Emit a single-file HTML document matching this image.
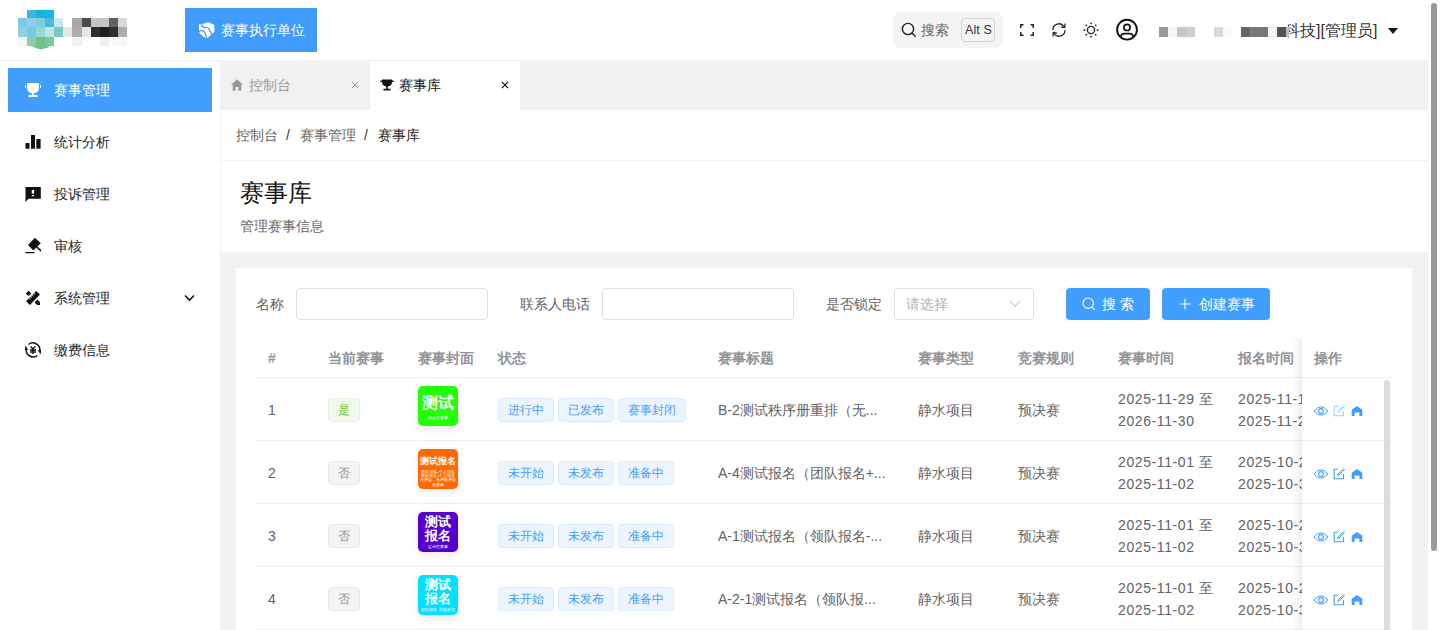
<!DOCTYPE html>
<html><head><meta charset="utf-8"><style>
*{box-sizing:border-box;margin:0;padding:0}
html,body{width:1440px;height:630px;overflow:hidden;background:#fff;font-family:"Liberation Sans",sans-serif;font-size:14px;color:#303133}
.a{position:absolute;white-space:nowrap}
.px{position:absolute;display:block}
.t14{font-size:14px;line-height:20px}
.menu{position:absolute;left:8px;width:204px;height:44px;color:#1f1f1f}
.menu.active{background:#409eff;color:#fff}
.menu svg{position:absolute;left:17px;top:14px}
.menu span{position:absolute;left:46px;top:12px;line-height:20px;font-size:14px}
.inp{position:absolute;top:288px;height:32px;border:1px solid #dcdfe6;border-radius:4px;background:#fff}
.lbl{position:absolute;top:294px;line-height:20px;color:#606266;font-size:14px}
.btn{position:absolute;top:288px;height:32px;border-radius:4px;background:#409eff;color:#fff}
.th{position:absolute;top:348px;line-height:20px;font-weight:bold;color:#909399;font-size:14px}
.hl{position:absolute;left:256px;width:1136px;height:1px;background:#ebeef5}
.td{position:absolute;line-height:20px;color:#606266;font-size:14px}
.tag{position:absolute;height:24px;line-height:22px;font-size:12px;border:1px solid #d9ecff;background:#ecf5ff;color:#409eff;border-radius:4px;text-align:center}
.tagg{border-color:#e1f3d8;background:#f0f9eb;color:#67c23a}
.tagi{border-color:#e9e9eb;background:#f4f4f5;color:#909399}
.cover{position:absolute;left:418px;width:40px;height:40px;border-radius:5px;color:#fff;text-align:center;overflow:hidden;box-shadow:0 3px 8px rgba(0,0,0,.09)}
</style></head><body>
<div class="a" style="left:0;top:0;width:1428px;height:60px;background:#fff"></div>
<div class="a" style="left:0;top:60px;width:1428px;height:1px;background:#efefef"></div>
<i class="px" style="left:27px;top:10px;width:9px;height:8px;background:#3db6d9"></i><i class="px" style="left:36px;top:10px;width:9px;height:8px;background:#17b3da"></i><i class="px" style="left:45px;top:10px;width:9px;height:8px;background:#17b7df"></i><i class="px" style="left:18px;top:18px;width:9px;height:9px;background:#7fc8e9"></i><i class="px" style="left:27px;top:18px;width:9px;height:9px;background:#8dcfea"></i><i class="px" style="left:36px;top:18px;width:9px;height:9px;background:#7dcde1"></i><i class="px" style="left:45px;top:18px;width:9px;height:9px;background:#4bb9d9"></i><i class="px" style="left:54px;top:18px;width:9px;height:9px;background:#c9e9f1"></i><i class="px" style="left:72px;top:18px;width:10px;height:9px;background:#a9a9a9"></i><i class="px" style="left:82px;top:18px;width:9px;height:9px;background:#4b4b4b"></i><i class="px" style="left:91px;top:18px;width:9px;height:9px;background:#c5c5c5"></i><i class="px" style="left:100px;top:18px;width:9px;height:9px;background:#c5c5c5"></i><i class="px" style="left:109px;top:18px;width:9px;height:9px;background:#626262"></i><i class="px" style="left:118px;top:18px;width:9px;height:9px;background:#d9d9d9"></i><i class="px" style="left:18px;top:27px;width:9px;height:10px;background:#8dd0df"></i><i class="px" style="left:27px;top:27px;width:9px;height:10px;background:#76cbe0"></i><i class="px" style="left:36px;top:27px;width:9px;height:10px;background:#9cd6d6"></i><i class="px" style="left:45px;top:27px;width:9px;height:10px;background:#c3e5e5"></i><i class="px" style="left:54px;top:27px;width:9px;height:10px;background:#7ac8c0"></i><i class="px" style="left:63px;top:27px;width:9px;height:10px;background:#e6e6e6"></i><i class="px" style="left:72px;top:27px;width:10px;height:10px;background:#adadad"></i><i class="px" style="left:82px;top:27px;width:9px;height:10px;background:#e6e6e6"></i><i class="px" style="left:91px;top:27px;width:9px;height:10px;background:#2e2e2e"></i><i class="px" style="left:100px;top:27px;width:9px;height:10px;background:#1f1f1f"></i><i class="px" style="left:109px;top:27px;width:9px;height:10px;background:#2e2e2e"></i><i class="px" style="left:118px;top:27px;width:9px;height:10px;background:#adadad"></i><i class="px" style="left:18px;top:37px;width:9px;height:9px;background:#f3f7f6"></i><i class="px" style="left:27px;top:37px;width:9px;height:9px;background:#8ecca9"></i><i class="px" style="left:36px;top:37px;width:9px;height:9px;background:#70c18f"></i><i class="px" style="left:45px;top:37px;width:9px;height:9px;background:#7ec69b"></i><i class="px" style="left:72px;top:37px;width:10px;height:9px;background:#f1f1f1"></i><i class="px" style="left:100px;top:37px;width:9px;height:9px;background:#efefef"></i><i class="px" style="left:109px;top:37px;width:9px;height:9px;background:#fafafa"></i><i class="px" style="left:118px;top:37px;width:9px;height:9px;background:#f7f7f7"></i>
<svg class="a" style="left:28px;top:44px" width="26" height="8" viewBox="0 0 26 8"><path d="M3.5 1.8 Q13 9 22.5 1.8 Z" fill="#6cc38a"/></svg>
<div class="a" style="left:185px;top:8px;width:132px;height:44px;background:#419dfd"></div>
<svg class="a" style="left:194px;top:18px" width="24" height="24" viewBox="0 0 24 24"><path d="M5 6 H8.3 L14.3 4.2 L20.4 7 V13.8 L13.6 19.9 L11.2 19.9 L5.8 15.5 L5 13.8 Z" fill="#fff"/><path d="M7.6 6 Q7.8 9.6 11 9.6 Q13.6 8.9 14.7 10.7 L18.2 17" fill="none" stroke="#419dfd" stroke-width="1.3"/><path d="M4.3 14.2 Q7.6 11.4 10.2 13.6 Q11.7 15.2 12.4 20.6" fill="none" stroke="#419dfd" stroke-width="1.3"/></svg>
<div class="a t14" style="left:221px;top:20px;color:#fff">赛事执行单位</div>
<div class="a" style="left:893px;top:12px;width:110px;height:36px;border-radius:8px;background:#f4f4f4"></div>
<svg class="a" style="left:901px;top:22px" width="16" height="16" viewBox="0 0 16 16"><circle cx="7" cy="7" r="5.6" fill="none" stroke="#222" stroke-width="1.4"/><line x1="11" y1="11" x2="14.2" y2="14.2" stroke="#222" stroke-width="1.5" stroke-linecap="round"/></svg>
<div class="a t14" style="left:921px;top:20px;color:#666">搜索</div>
<div class="a" style="left:961px;top:18px;width:34px;height:24px;border:1px solid #d4d4d4;border-radius:4px;background:#f4f4f4"></div>
<div class="a" style="left:965px;top:21px;font-size:12.5px;line-height:18px;color:#333;letter-spacing:0.1px">Alt S</div>
<svg class="a" style="left:1020px;top:24px" width="14" height="12" viewBox="0 0 14 12"><path d="M0.75 4 V0.75 H3.5 M10.5 0.75 H13.25 V4 M13.25 8 V11.25 H10.5 M3.5 11.25 H0.75 V8" fill="none" stroke="#222" stroke-width="1.5"/></svg>
<svg class="a" style="left:1051px;top:22px" width="16" height="16" viewBox="0 0 16 16"><path d="M2 8 A6 6 0 0 1 13 4.5" fill="none" stroke="#222" stroke-width="1.3"/><path d="M14 8 A6 6 0 0 1 3 11.5" fill="none" stroke="#222" stroke-width="1.3"/><path d="M14 1.5 L13.8 5.5 L10 4.8" fill="none" stroke="#222" stroke-width="1.3" stroke-linejoin="round"/><path d="M2 14.5 L2.2 10.5 L6 11.2" fill="none" stroke="#222" stroke-width="1.3" stroke-linejoin="round"/></svg>
<svg class="a" style="left:1083px;top:22px" width="16" height="16" viewBox="0 0 16 16"><circle cx="8" cy="8" r="3.6" fill="none" stroke="#222" stroke-width="1.4"/><g fill="#222"><circle cx="8" cy="1.4" r="0.9"/><circle cx="8" cy="14.6" r="0.9"/><circle cx="1.4" cy="8" r="0.9"/><circle cx="14.6" cy="8" r="0.9"/><circle cx="3.3" cy="3.3" r="0.9"/><circle cx="12.7" cy="3.3" r="0.9"/><circle cx="3.3" cy="12.7" r="0.9"/><circle cx="12.7" cy="12.7" r="0.9"/></g></svg>
<svg class="a" style="left:1115px;top:18px" width="24" height="24" viewBox="0 0 24 24"><circle cx="12" cy="11.7" r="9.9" fill="none" stroke="#111" stroke-width="1.9"/><circle cx="12" cy="9.4" r="3.1" fill="none" stroke="#111" stroke-width="1.7"/><path d="M5.6 18.8 Q6.2 15.7 9.6 15.7 H14.4 Q17.8 15.7 18.4 18.8" fill="none" stroke="#111" stroke-width="1.7"/></svg>
<i class="px" style="left:1159px;top:27px;width:9px;height:10px;background:#999"></i>
<i class="px" style="left:1168px;top:27px;width:9px;height:10px;background:#f5f5f5"></i>
<i class="px" style="left:1177px;top:27px;width:9px;height:10px;background:#c4c4c4"></i>
<i class="px" style="left:1186px;top:27px;width:9px;height:10px;background:#cdcdcd"></i>
<i class="px" style="left:1214px;top:27px;width:9px;height:10px;background:#d9d9d9"></i>
<i class="px" style="left:1223px;top:27px;width:9px;height:10px;background:#f9f9f9"></i>
<i class="px" style="left:1241px;top:27px;width:9px;height:10px;background:#666"></i>
<i class="px" style="left:1250px;top:27px;width:18px;height:10px;background:#777"></i>
<i class="px" style="left:1268px;top:27px;width:9px;height:10px;background:#f5f5f5"></i>
<i class="px" style="left:1277px;top:27px;width:9px;height:10px;background:#555"></i>
<div class="a" style="left:1288px;top:20px;width:12px;height:22px;overflow:hidden"><div class="a" style="left:-4px;top:0;font-size:16px;line-height:22px;color:#303133">科</div></div>
<i class="px" style="left:1286px;top:27px;width:3px;height:10px;background:#bbb"></i>
<div class="a" style="left:1300px;top:20px;font-size:16px;line-height:22px;color:#303133">技][管理员]</div>
<svg class="a" style="left:1388px;top:28px" width="10" height="6" viewBox="0 0 10 6"><path d="M0 0 H10 L5 6 Z" fill="#111"/></svg>
<div class="a" style="left:0;top:61px;width:220px;height:569px;background:#fff"></div>
<div class="menu active" style="top:68px"><svg width="16" height="16" viewBox="0 0 16 16"><path d="M2 1 H14 V5.5 Q14 10.5 8.8 11.6 V13 H12.5 V15 H3.5 V13 H7.2 V11.6 Q2 10.5 2 5.5 Z" fill="#fff"/><rect x="0" y="3" width="1" height="3" fill="#fff"/><rect x="15" y="3" width="1" height="3" fill="#fff"/></svg><span>赛事管理</span></div>
<div class="menu" style="top:120px"><svg width="16" height="16" viewBox="0 0 16 16"><rect x="0.5" y="9" width="4" height="5.7" fill="#111"/><rect x="6" y="1" width="4" height="13.7" fill="#111"/><rect x="11.3" y="5" width="4.3" height="9.7" fill="#111"/></svg><span>统计分析</span></div>
<div class="menu" style="top:172px"><svg width="16" height="16" viewBox="0 0 16 16"><path d="M0.5 1 H15.8 V12.8 H3.5 L0.5 16 Z" fill="#111"/><rect x="6.8" y="4" width="2.3" height="3.6" fill="#fff"/><rect x="6.8" y="9" width="2.3" height="1.2" fill="#fff"/></svg><span>投诉管理</span></div>
<div class="menu" style="top:224px"><svg width="16" height="16" viewBox="0 0 16 16"><path d="M9.9 -0.2 L15.8 5.3 L8.3 12.4 L3 6.9 Z" fill="#111"/><path d="M12 9 L15.7 12.6" stroke="#111" stroke-width="1.5" stroke-linecap="round"/><rect x="0.3" y="13.9" width="9.4" height="1.3" rx="0.6" fill="#111"/></svg><span>审核</span></div>
<div class="menu" style="top:276px"><svg width="16" height="16" viewBox="0 0 16 16"><path d="M11.2 0.9 L14.9 4.6 L4.9 14.9 L1.1 11.2 Z" fill="#111"/><path d="M3.4 7.0 L5.5 9.1 M4.9 5.5 L7.0 7.6 M6.4 4.0 L8.5 6.1 M7.9 2.5 L9.8 4.4" stroke="#fff" stroke-width="1"/><path d="M3.7 0.8 L6.3 3.4 L3.4 6.1 L0.8 3.5 Z" fill="#111"/><path d="M12.4 9.5 L15 12.1 V15 H12.1 L9.6 12.4 Z" fill="#111"/></svg><span>系统管理</span></div>
<div class="menu" style="top:328px"><svg width="16" height="16" viewBox="0 0 16 16"><path d="M3.5 2.5 A7 7 0 0 1 14.8 9" fill="none" stroke="#111" stroke-width="1.5"/><path d="M12.5 13.5 A7 7 0 0 1 1.3 7" fill="none" stroke="#111" stroke-width="1.5"/><path d="M0.7 3.5 L3 8 L-0.5 8 Z" fill="#111"/><path d="M15.3 12.5 L13 8 L16.5 8 Z" fill="#111"/><path d="M5.6 4.5 L8 7 L10.4 4.5 M5 8 H11 M5 10 H11 M8 7 V12" fill="none" stroke="#111" stroke-width="1.4"/></svg><span>缴费信息</span></div>
<svg class="a" style="left:184px;top:294px" width="11" height="8" viewBox="0 0 11 8"><path d="M1 1.5 L5.5 6 L10 1.5" fill="none" stroke="#111" stroke-width="1.6"/></svg>
<div class="a" style="left:220px;top:61px;width:1208px;height:569px;background:#f1f1f1"></div>
<svg class="a" style="left:231px;top:79px" width="12" height="12" viewBox="0 0 12 12"><path d="M6 0.3 L12 5.8 H10.3 V11.7 H7.4 V8 H4.6 V11.7 H1.7 V5.8 H0 Z" fill="#999"/></svg>
<div class="a t14" style="left:249px;top:75px;color:#999">控制台</div>
<svg class="a" style="left:351px;top:81px" width="8" height="8" viewBox="0 0 8 8"><path d="M0.8 0.8 L7.2 7.2 M7.2 0.8 L0.8 7.2" stroke="#999" stroke-width="1"/></svg>
<div class="a" style="left:370px;top:61px;width:150px;height:49px;background:#fff"></div>
<svg class="a" style="left:380px;top:79px" width="14" height="12" viewBox="0 0 14 12"><path d="M2 0.5 H12 V3 Q12 6.8 7.8 7.6 V9.8 H10.5 V11.5 H3.5 V9.8 H6.2 V7.6 Q2 6.8 2 3 Z" fill="#111"/><rect x="0.3" y="1.5" width="2" height="1.5" fill="#111"/><rect x="11.7" y="1.5" width="2" height="1.5" fill="#111"/></svg>
<div class="a t14" style="left:399px;top:75px;color:#111">赛事库</div>
<svg class="a" style="left:501px;top:81px" width="8" height="8" viewBox="0 0 8 8"><path d="M0.8 0.8 L7.2 7.2 M7.2 0.8 L0.8 7.2" stroke="#111" stroke-width="1.2"/></svg>
<div class="a" style="left:221px;top:110px;width:1207px;height:50px;background:#fff"></div>
<div class="a t14" style="left:236px;top:125px;color:#666">控制台</div>
<div class="a t14" style="left:286px;top:125px;color:#333">/</div>
<div class="a t14" style="left:300px;top:125px;color:#666">赛事管理</div>
<div class="a t14" style="left:364px;top:125px;color:#333">/</div>
<div class="a t14" style="left:378px;top:125px;color:#222">赛事库</div>
<div class="a" style="left:221px;top:161px;width:1207px;height:91px;background:#fff"></div>
<div class="a" style="left:240px;top:178px;font-size:24px;line-height:30px;color:#111">赛事库</div>
<div class="a t14" style="left:240px;top:216px;color:#666">管理赛事信息</div>
<div class="a" style="left:236px;top:268px;width:1176px;height:400px;background:#fff"></div>
<div class="lbl" style="left:256px">名称</div>
<div class="inp" style="left:296px;width:192px"></div>
<div class="lbl" style="left:520px">联系人电话</div>
<div class="inp" style="left:602px;width:192px"></div>
<div class="lbl" style="left:826px">是否锁定</div>
<div class="inp" style="left:894px;width:140px"></div>
<div class="a t14" style="left:906px;top:294px;color:#b4b4b4">请选择</div>
<svg class="a" style="left:1009px;top:300px" width="12" height="8" viewBox="0 0 12 8"><path d="M1 1.2 L6 6.2 L11 1.2" fill="none" stroke="#c0c4cc" stroke-width="1.1"/></svg>
<div class="btn" style="left:1066px;width:84px"></div>
<svg class="a" style="left:1082px;top:297px" width="14" height="14" viewBox="0 0 14 14"><circle cx="6.2" cy="6.2" r="5.2" fill="none" stroke="#fff" stroke-width="1.1"/><path d="M10 10 L12.8 12.8" stroke="#fff" stroke-width="1.1"/></svg>
<div class="a t14" style="left:1102px;top:294px;color:#fff">搜</div>
<div class="a t14" style="left:1120px;top:294px;color:#fff">索</div>
<div class="btn" style="left:1162px;width:108px"></div>
<svg class="a" style="left:1179px;top:298px" width="12" height="12" viewBox="0 0 12 12"><path d="M6 0.5 V11.5 M0.5 6 H11.5" stroke="#fff" stroke-width="1.1"/></svg>
<div class="a t14" style="left:1199px;top:294px;color:#fff">创建赛事</div>
<div class="th" style="left:268px">#</div>
<div class="th" style="left:328px">当前赛事</div>
<div class="th" style="left:418px">赛事封面</div>
<div class="th" style="left:498px">状态</div>
<div class="th" style="left:718px">赛事标题</div>
<div class="th" style="left:918px">赛事类型</div>
<div class="th" style="left:1018px">竞赛规则</div>
<div class="th" style="left:1118px">赛事时间</div>
<div class="th" style="left:1238px">报名时间</div>
<div class="hl" style="top:377px"></div>
<div class="td" style="left:268px;top:400px">1</div>
<div class="tag tagg" style="left:328px;top:398px;width:32px">是</div>
<div class="cover" style="top:386px;background:#22ff00"><div class="a" style="left:0;width:40px;top:8px;font-size:16px;line-height:18px;font-weight:bold;text-align:center">测试</div><div class="a" style="left:0;width:40px;top:29px;font-size:4px;line-height:5px;text-align:center">综合性赛事</div></div>
<div class="tag" style="left:498px;top:398px;width:56px">进行中</div>
<div class="tag" style="left:558px;top:398px;width:56px">已发布</div>
<div class="tag" style="left:618px;top:398px;width:68px">赛事封闭</div>
<div class="td" style="left:718px;top:400px">B-2测试秩序册重排（无...</div>
<div class="td" style="left:918px;top:400px">静水项目</div>
<div class="td" style="left:1018px;top:400px">预决赛</div>
<div class="td" style="left:1118px;top:388px;line-height:22px;letter-spacing:0.6px">2025-11-29 至<br>2026-11-30</div>
<div class="td" style="left:1238px;top:388px;line-height:22px;letter-spacing:0.6px">2025-11-15 至<br>2025-11-28</div>
<div class="hl" style="top:440px"></div>
<div class="td" style="left:268px;top:463px">2</div>
<div class="tag tagi" style="left:328px;top:461px;width:32px">否</div>
<div class="cover" style="top:449px;background:#ff6a00"><div class="a" style="left:0;width:40px;top:7px;font-size:9px;line-height:11px;font-weight:bold;text-align:center">测试报名</div><div class="a" style="left:0;width:40px;top:21px;font-size:3.6px;line-height:4.2px;text-align:center;white-space:normal">团队报名+个人报名<br>有队报名+个人报名<br>无押金，无押收押金<br>无赛事</div></div>
<div class="tag" style="left:498px;top:461px;width:56px">未开始</div>
<div class="tag" style="left:558px;top:461px;width:56px">未发布</div>
<div class="tag" style="left:618px;top:461px;width:56px">准备中</div>
<div class="td" style="left:718px;top:463px">A-4测试报名（团队报名+...</div>
<div class="td" style="left:918px;top:463px">静水项目</div>
<div class="td" style="left:1018px;top:463px">预决赛</div>
<div class="td" style="left:1118px;top:451px;line-height:22px;letter-spacing:0.6px">2025-11-01 至<br>2025-11-02</div>
<div class="td" style="left:1238px;top:451px;line-height:22px;letter-spacing:0.6px">2025-10-20 至<br>2025-10-31</div>
<div class="hl" style="top:503px"></div>
<div class="td" style="left:268px;top:526px">3</div>
<div class="tag tagi" style="left:328px;top:524px;width:32px">否</div>
<div class="cover" style="top:512px;background:#5500cc"><div class="a" style="left:0;width:40px;top:3px;font-size:13px;line-height:13.5px;font-weight:bold;text-align:center;white-space:normal">测试<br>报名</div><div class="a" style="left:0;width:40px;top:32px;font-size:4.2px;line-height:5px;text-align:center">提示性赛事</div></div>
<div class="tag" style="left:498px;top:524px;width:56px">未开始</div>
<div class="tag" style="left:558px;top:524px;width:56px">未发布</div>
<div class="tag" style="left:618px;top:524px;width:56px">准备中</div>
<div class="td" style="left:718px;top:526px">A-1测试报名（领队报名-...</div>
<div class="td" style="left:918px;top:526px">静水项目</div>
<div class="td" style="left:1018px;top:526px">预决赛</div>
<div class="td" style="left:1118px;top:514px;line-height:22px;letter-spacing:0.6px">2025-11-01 至<br>2025-11-02</div>
<div class="td" style="left:1238px;top:514px;line-height:22px;letter-spacing:0.6px">2025-10-20 至<br>2025-10-31</div>
<div class="hl" style="top:566px"></div>
<div class="td" style="left:268px;top:589px">4</div>
<div class="tag tagi" style="left:328px;top:587px;width:32px">否</div>
<div class="cover" style="top:575px;background:#00e1ff"><div class="a" style="left:0;width:40px;top:3px;font-size:13px;line-height:13.5px;font-weight:bold;text-align:center;white-space:normal">测试<br>报名</div><div class="a" style="left:0;width:40px;top:32px;font-size:4px;line-height:5px;text-align:center">团队报名·在线支付</div></div>
<div class="tag" style="left:498px;top:587px;width:56px">未开始</div>
<div class="tag" style="left:558px;top:587px;width:56px">未发布</div>
<div class="tag" style="left:618px;top:587px;width:56px">准备中</div>
<div class="td" style="left:718px;top:589px">A-2-1测试报名（领队报...</div>
<div class="td" style="left:918px;top:589px">静水项目</div>
<div class="td" style="left:1018px;top:589px">预决赛</div>
<div class="td" style="left:1118px;top:577px;line-height:22px;letter-spacing:0.6px">2025-11-01 至<br>2025-11-02</div>
<div class="td" style="left:1238px;top:577px;line-height:22px;letter-spacing:0.6px">2025-10-20 至<br>2025-10-31</div>
<div class="hl" style="top:629px"></div>
<div class="a" style="left:1292px;top:338px;width:10px;height:300px;background:linear-gradient(to right,rgba(0,0,0,0),rgba(0,0,0,.06))"></div>
<div class="a" style="left:1302px;top:338px;width:90px;height:300px;background:#fff"></div>
<div class="th" style="left:1314px">操作</div>
<div class="a" style="left:1302px;top:377px;width:90px;height:1px;background:#ebeef5"></div>
<div class="a" style="left:1302px;top:440px;width:90px;height:1px;background:#ebeef5"></div>
<svg class="a" style="left:1313px;top:405px" width="16" height="12" viewBox="0 0 16 12"><path d="M1 6 Q8 -2.3 15 6 Q8 14.3 1 6 Z" fill="none" stroke="#409eff" stroke-width="1"/><circle cx="8" cy="6" r="2.4" fill="none" stroke="#409eff" stroke-width="1.1"/></svg>
<svg class="a" style="left:1333px;top:405px;opacity:0.5" width="12" height="12" viewBox="0 0 12 12"><path d="M5 1.3 H1.2 V10.7 H10.5 V6" fill="none" stroke="#409eff" stroke-width="1.1"/><path d="M10.7 0.7 L11.5 1.5 L6 7 L4.6 7.4 L5 6 Z" fill="none" stroke="#409eff" stroke-width="1"/></svg>
<svg class="a" style="left:1351px;top:405px" width="12" height="12" viewBox="0 0 12 12"><path d="M6 0.9 L11.3 4.8 V11 H8.4 V7.6 H3.6 V11 H0.7 V4.8 Z" fill="#409eff"/></svg>
<div class="a" style="left:1302px;top:503px;width:90px;height:1px;background:#ebeef5"></div>
<svg class="a" style="left:1313px;top:468px" width="16" height="12" viewBox="0 0 16 12"><path d="M1 6 Q8 -2.3 15 6 Q8 14.3 1 6 Z" fill="none" stroke="#409eff" stroke-width="1"/><circle cx="8" cy="6" r="2.4" fill="none" stroke="#409eff" stroke-width="1.1"/></svg>
<svg class="a" style="left:1333px;top:468px;opacity:1" width="12" height="12" viewBox="0 0 12 12"><path d="M5 1.3 H1.2 V10.7 H10.5 V6" fill="none" stroke="#409eff" stroke-width="1.1"/><path d="M10.7 0.7 L11.5 1.5 L6 7 L4.6 7.4 L5 6 Z" fill="none" stroke="#409eff" stroke-width="1"/></svg>
<svg class="a" style="left:1351px;top:468px" width="12" height="12" viewBox="0 0 12 12"><path d="M6 0.9 L11.3 4.8 V11 H8.4 V7.6 H3.6 V11 H0.7 V4.8 Z" fill="#409eff"/></svg>
<div class="a" style="left:1302px;top:566px;width:90px;height:1px;background:#ebeef5"></div>
<svg class="a" style="left:1313px;top:531px" width="16" height="12" viewBox="0 0 16 12"><path d="M1 6 Q8 -2.3 15 6 Q8 14.3 1 6 Z" fill="none" stroke="#409eff" stroke-width="1"/><circle cx="8" cy="6" r="2.4" fill="none" stroke="#409eff" stroke-width="1.1"/></svg>
<svg class="a" style="left:1333px;top:531px;opacity:1" width="12" height="12" viewBox="0 0 12 12"><path d="M5 1.3 H1.2 V10.7 H10.5 V6" fill="none" stroke="#409eff" stroke-width="1.1"/><path d="M10.7 0.7 L11.5 1.5 L6 7 L4.6 7.4 L5 6 Z" fill="none" stroke="#409eff" stroke-width="1"/></svg>
<svg class="a" style="left:1351px;top:531px" width="12" height="12" viewBox="0 0 12 12"><path d="M6 0.9 L11.3 4.8 V11 H8.4 V7.6 H3.6 V11 H0.7 V4.8 Z" fill="#409eff"/></svg>
<div class="a" style="left:1302px;top:629px;width:90px;height:1px;background:#ebeef5"></div>
<svg class="a" style="left:1313px;top:594px" width="16" height="12" viewBox="0 0 16 12"><path d="M1 6 Q8 -2.3 15 6 Q8 14.3 1 6 Z" fill="none" stroke="#409eff" stroke-width="1"/><circle cx="8" cy="6" r="2.4" fill="none" stroke="#409eff" stroke-width="1.1"/></svg>
<svg class="a" style="left:1333px;top:594px;opacity:1" width="12" height="12" viewBox="0 0 12 12"><path d="M5 1.3 H1.2 V10.7 H10.5 V6" fill="none" stroke="#409eff" stroke-width="1.1"/><path d="M10.7 0.7 L11.5 1.5 L6 7 L4.6 7.4 L5 6 Z" fill="none" stroke="#409eff" stroke-width="1"/></svg>
<svg class="a" style="left:1351px;top:594px" width="12" height="12" viewBox="0 0 12 12"><path d="M6 0.9 L11.3 4.8 V11 H8.4 V7.6 H3.6 V11 H0.7 V4.8 Z" fill="#409eff"/></svg>
<div class="a" style="left:1384px;top:380px;width:6px;height:260px;border-radius:3px;background:#dcdcdc"></div>
<div class="a" style="left:1428px;top:0;width:12px;height:630px;background:#fff"></div>
<div class="a" style="left:1431px;top:3px;width:6px;height:548px;border-radius:3px;background:#999"></div>
</body></html>
